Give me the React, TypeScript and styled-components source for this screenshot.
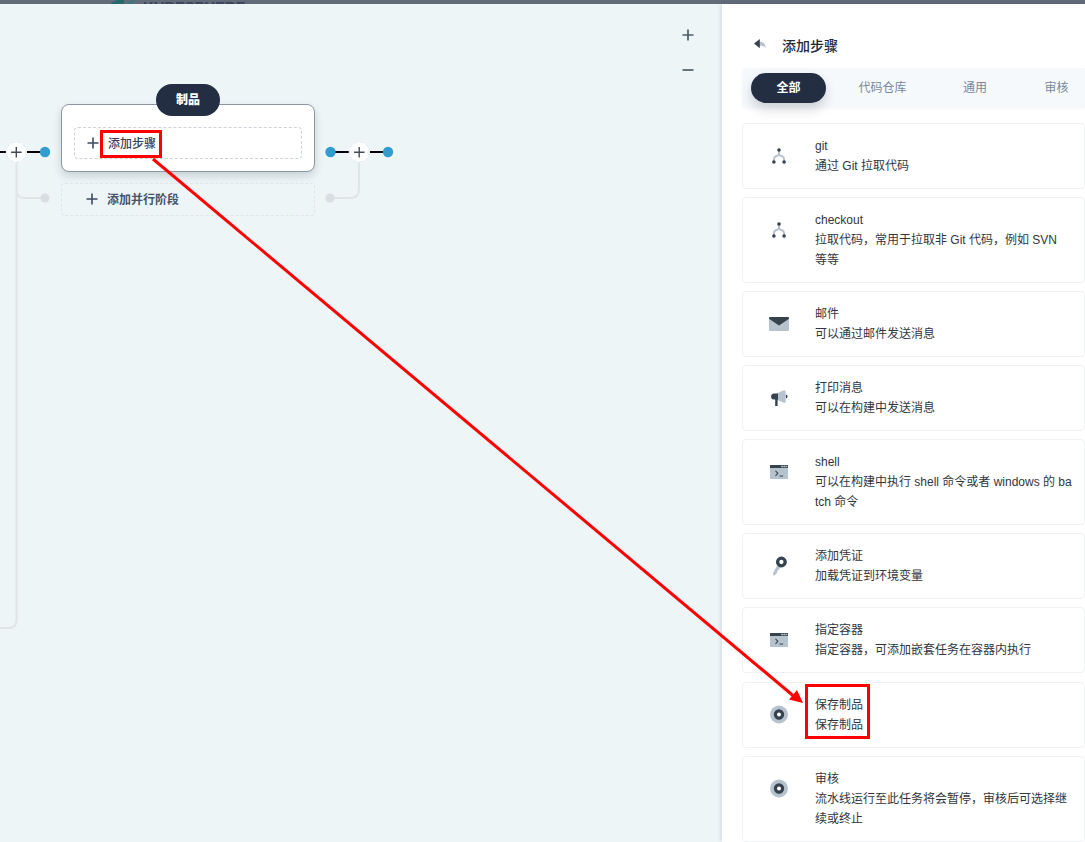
import React from "react";
import styled, { createGlobalStyle } from "styled-components";

const Global = createGlobalStyle`
  * { box-sizing: border-box; }
  body {
    margin: 0;
    font-family: "Liberation Sans", "Noto Sans CJK SC", sans-serif;
    font-size: 12px;
    color: #303640;
  }
`;

const Page = styled.div`
  position: relative;
  width: 1085px;
  height: 842px;
  display: flex;
  flex-direction: column;
  overflow: hidden;
`;

const TopBar = styled.header`
  height: 4px;
  flex: none;
  display: flex;
  gap: 6px;
  padding-left: 110px;
  background: #626b7a;
  overflow: hidden;
`;

const Brand = styled.span`
  font-size: 15px;
  font-weight: 700;
  line-height: 13px;
  color: #3a4358;
  letter-spacing: -0.2px;
`;

const Body = styled.div`
  flex: 1;
  min-height: 0;
  display: flex;
`;

const Canvas = styled.main`
  position: relative;
  width: 722px;
  flex: none;
  background: #edf5f7;
`;

const Wires = styled.svg`
  position: absolute;
  left: 0;
  top: 0;
`;

const Zoom = styled.div`
  position: absolute;
  left: 680px;
  top: 23px;
  display: flex;
  flex-direction: column;
  gap: 19px;
`;

const Stage = styled.section`
  position: absolute;
  left: 61px;
  top: 100px;
  width: 254px;
  height: 68px;
  display: flex;
  padding: 22px 12px 12px;
  background: #fff;
  border: 1px solid #8c96a3;
  border-radius: 8px;
  box-shadow: 0 4px 8px rgba(36, 46, 66, 0.18);
`;

const StageName = styled.h2`
  position: absolute;
  left: 94px;
  top: -21px;
  width: 64px;
  height: 32px;
  margin: 0;
  border-radius: 16px;
  background: #242e42;
  color: #fff;
  font-size: 12px;
  line-height: 33px;
  font-weight: 900;
  text-align: center;
`;

const AddStep = styled.button`
  flex: 1;
  height: 32px;
  display: flex;
  align-items: center;
  gap: 9px;
  padding: 0 0 1px 12px;
  border: 1px dashed #ccd3db;
  border-radius: 4px;
  background: #fff;
  font: inherit;
  font-weight: 500;
  color: #36435c;
`;

const AddParallel = styled.button`
  position: absolute;
  left: 61px;
  top: 179px;
  width: 254px;
  height: 33px;
  display: flex;
  align-items: center;
  gap: 9px;
  padding: 0 0 2px 24px;
  border: 1px dashed #dfe5ea;
  border-radius: 4px;
  background: transparent;
  font: inherit;
  font-weight: 700;
  color: #48546a;
`;

const Panel = styled.aside`
  flex: 1;
  min-width: 0;
  padding: 30px 0 0 20px;
  background: #fff;
  box-shadow: -1px 0 4px rgba(36, 46, 66, 0.15);
  position: relative;
`;

const PanelHead = styled.div`
  display: flex;
  align-items: center;
  gap: 15px;
  height: 24px;
  padding-left: 11px;
`;

const PanelTitle = styled.h1`
  margin: 0;
  font-size: 14px;
  line-height: 24px;
  font-weight: 500;
  color: #20283a;
`;

const Tabs = styled.nav`
  display: flex;
  align-items: center;
  height: 40px;
  margin-top: 10px;
  padding-left: 9px;
  background: #f6f9fc;
  border-radius: 4px 0 0 4px;
  box-shadow: 0 1px 3px rgba(36, 46, 66, 0.03);
`;

const Tab = styled.span<{ $active?: boolean; $width: number }>`
  flex: none;
  width: ${(p) => p.$width}px;
  height: 30px;
  line-height: 31px;
  text-align: center;
  border-radius: 15px;
  color: ${(p) => (p.$active ? "#fff" : "#79879c")};
  font-weight: ${(p) => (p.$active ? 700 : 400)};
  background: ${(p) => (p.$active ? "#242e42" : "transparent")};
  box-shadow: ${(p) => (p.$active ? "0 6px 12px rgba(36, 46, 66, 0.2)" : "none")};
`;

const List = styled.ul`
  list-style: none;
  margin: 15px 0 0;
  padding: 0;
  display: flex;
  flex-direction: column;
  gap: 8.08px;
`;

const Card = styled.li`
  display: flex;
  gap: 16px;
  width: 343px;
  padding: 12px 10px 12px 16px;
  border: 1px solid #eff1f3;
  border-radius: 4px;
`;

const IconBox = styled.span`
  width: 40px;
  height: 40px;
  flex: none;
  display: grid;
  place-items: center;
`;

const Copy = styled.div`
  white-space: pre;
  line-height: 20px;
`;

const Line = styled.p`
  margin: 0;
  height: 20px;
`;

const Annotation = styled.svg`
  position: absolute;
  left: 0;
  top: 0;
  pointer-events: none;
`;

const Plus = ({ size = 12, color = "#3d4a5e" }) => (
  <svg width={size} height={size} viewBox="0 0 12 12" stroke={color} strokeWidth="1.6">
    <path d="M6 .5v11M.5 6h11" />
  </svg>
);

const dark = "#36434f";
const light = "#b6c2cd";

const icons: Record<string, React.ReactNode> = {
  fork: (
    <>
      <path d="M12 6v4.500M7 17.500v-2.500q0-2 1.800-2.700L12 10.800l3.200 1.500q1.800.7 1.800 2.700v2.500" fill="none" stroke={light} strokeWidth="2" />
      <circle cx="12" cy="6" r="1.8" fill={dark} />
      <circle cx="6.9" cy="18" r="1.8" fill={dark} />
      <circle cx="17.1" cy="18" r="1.8" fill={dark} />
    </>
  ),
  mail: (
    <>
      <rect x="2" y="5" width="20" height="14" rx="1.2" fill={light} />
      <path d="M3 5h18q1 0 1 1v.8L12 13.5 2 6.8V6q0-1 1-1z" fill={dark} />
    </>
  ),
  horn: (
    <>
      <path d="M10 7.3 17 4.2q1.6-.3 1.6 1.5v9.6q0 1.8-1.6 1.5l-7-3z" fill={light} />
      <path d="M18.900 8.600q1.700.3 1.700 1.900t-1.700 1.900zM6.500 7.500H11v6h-.4v6.500H8.200v-6.500H6.500Q4 13.200 4 10.500t2.500-3z" fill={dark} />
    </>
  ),
  terminal: (
    <>
      <path d="M3 8h18v11H3z" fill={light} />
      <path d="M3 5h18v3H3z" fill={dark} />
      <path d="M14.200 6.500h6.300" stroke="#b8c3cc" strokeWidth="1.500" strokeDasharray="1.700 .5" />
      <path d="m8.500 10.800 2.300 2.500-2.300 2.500M12.500 16h3.600" fill="none" stroke={dark} strokeWidth="1.1" />
    </>
  ),
  key: (
    <>
      <path d="m11 10 3 3-3.800 4.200-.2 2-3.500 2.800-.5-3z" fill={light} />
      <circle cx="14.400" cy="8" r="3.800" fill="#fff" stroke={dark} strokeWidth="3.300" />
    </>
  ),
  disc: (
    <>
      <circle cx="12" cy="11.500" r="9" fill={light} />
      <circle cx="12" cy="11.500" r="3.600" fill="#fff" stroke={dark} strokeWidth="3.200" />
    </>
  ),
};

const steps: { icon: string; lines: string[] }[] = [
  { icon: "fork", lines: ["git", "通过 Git 拉取代码"] },
  { icon: "fork", lines: ["checkout", "拉取代码，常用于拉取非 Git 代码，例如 SVN", "等等"] },
  { icon: "mail", lines: ["邮件", "可以通过邮件发送消息"] },
  { icon: "horn", lines: ["打印消息", "可以在构建中发送消息"] },
  { icon: "terminal", lines: ["shell", "可以在构建中执行 shell 命令或者 windows 的 ba", "tch 命令"] },
  { icon: "key", lines: ["添加凭证", "加载凭证到环境变量"] },
  { icon: "terminal", lines: ["指定容器", "指定容器，可添加嵌套任务在容器内执行"] },
  { icon: "disc", lines: ["保存制品", "保存制品"] },
  { icon: "disc", lines: ["审核", "流水线运行至此任务将会暂停，审核后可选择继", "续或终止"] },
];

const Joint = ({ x }: { x: number }) => (
  <g>
    <circle cx={x} cy="148" r="10" fill="#fff" stroke="#e3e8ec" strokeWidth="1" strokeDasharray="3 3" />
    <path d={`M${x} 143v10.5M${x - 5.2} 148.2h10.5`} stroke="#444b55" strokeWidth="1.4" />
  </g>
);

export default function App() {
  return (
    <Page>
      <Global />
      <TopBar>
        <svg width="27" height="4" viewBox="0 0 27 4">
          <path d="M1 4V3l6-3h7v4z" fill="#27686d" />
          <path d="m16 4 6-4h3l-4 4z" fill="#39787b" />
        </svg>
        <Brand>KUBESPHERE</Brand>
      </TopBar>
      <Body>
        <Canvas>
          <Wires width="722" height="838" fill="none">
            <g stroke="#e0e5e8" strokeWidth="2">
              <path d="M16.500 158V616q0 8-8 8H0M16.500 186q0 8 8 8H44" />
              <path d="M359 158v27q0 9-9 9H331" />
            </g>
            <g fill="#d9dee2">
              <circle cx="45" cy="194" r="4.500" />
              <circle cx="330" cy="194" r="4.500" />
            </g>
            <path d="M0 148h6M27 148h14M334 148h15M370 148h14" stroke="#000" strokeWidth="2" />
            <g fill="#329dce">
              <circle cx="45" cy="148" r="5.200" />
              <circle cx="330.500" cy="148" r="5.200" />
              <circle cx="388" cy="148" r="5.200" />
            </g>
            <Joint x={16.3} />
            <Joint x={359.2} />
          </Wires>
          <Stage>
            <StageName>制品</StageName>
            <AddStep>
              <Plus />
              添加步骤
            </AddStep>
          </Stage>
          <AddParallel>
            <Plus />
            添加并行阶段
          </AddParallel>
          <Zoom>
            <svg width="16" height="16" viewBox="0 0 16 16" stroke="#4d5b68" strokeWidth="1.7">
              <path d="M8 2.500v11M2.500 8h11" />
            </svg>
            <svg width="16" height="16" viewBox="0 0 16 16" stroke="#4d5b68" strokeWidth="1.7">
              <path d="M2.500 8h11" />
            </svg>
          </Zoom>
        </Canvas>
        <Panel>
          <PanelHead>
            <svg width="14" height="14" viewBox="0 0 14 14">
              <path d="M6 2.600q6 0 6.700 6.400Q10.500 6.500 6 6.500z" fill={light} />
              <path d="M6.800 0v9.200L1 4.600z" fill={dark} />
            </svg>
            <PanelTitle>添加步骤</PanelTitle>
          </PanelHead>
          <Tabs>
            <Tab $active $width={75}>全部</Tab>
            <Tab $width={113}>代码仓库</Tab>
            <Tab $width={72}>通用</Tab>
            <Tab $width={91}>审核</Tab>
          </Tabs>
          <List>
            {steps.map((s, i) => (
              <Card key={i}>
                <IconBox>
                  <svg width="24" height="24" viewBox="0 0 24 24">{icons[s.icon]}</svg>
                </IconBox>
                <Copy>
                  {s.lines.map((l, j) => (
                    <Line key={j}>{l}</Line>
                  ))}
                </Copy>
              </Card>
            ))}
          </List>
        </Panel>
      </Body>
      <Annotation width="1085" height="842" fill="none" stroke="#f00" strokeWidth="3">
        <rect x="101.500" y="131.500" width="59" height="25" />
        <rect x="806.500" y="685.500" width="62" height="52" />
        <path d="M153 159 793 695.500" />
        <path d="M803 703 789 699.500 797 690z" fill="#f00" stroke="none" />
      </Annotation>
    </Page>
  );
}
